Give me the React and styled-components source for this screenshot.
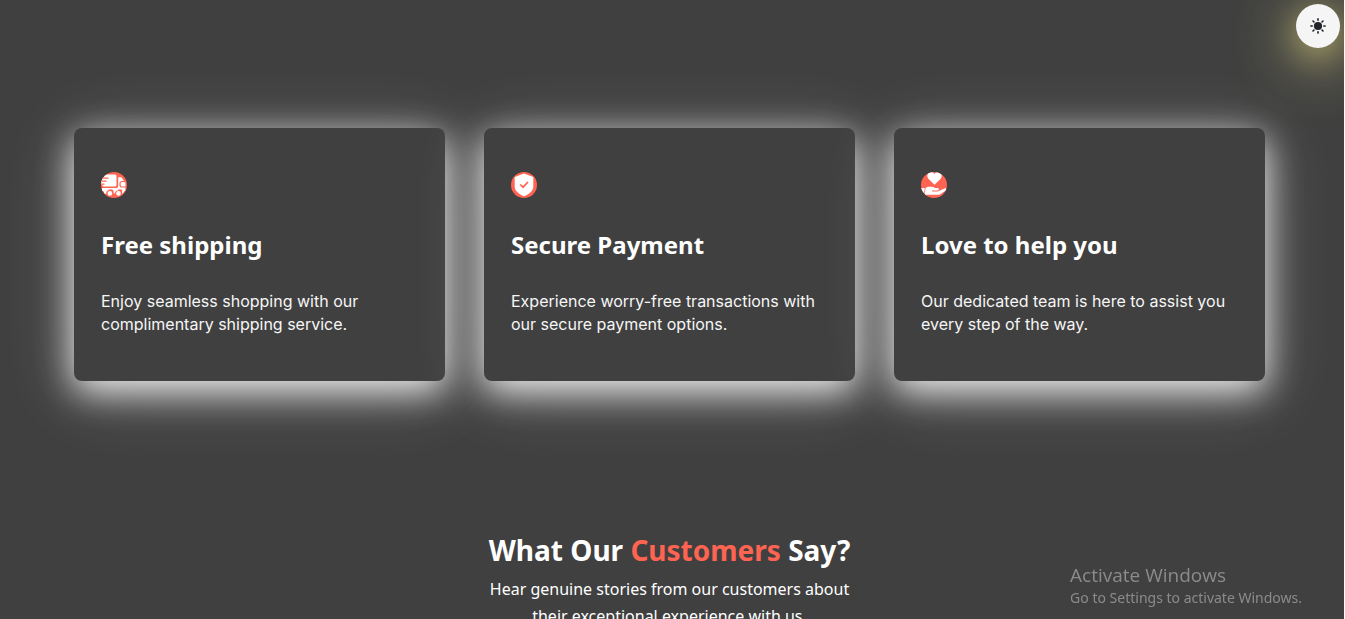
import React from "react";
import styled, { createGlobalStyle } from "styled-components";

const GlobalStyle = createGlobalStyle`
  *, *::before, *::after { box-sizing: border-box; }
  html { background: #ffffff; overflow: hidden; }
  body { margin: 0; }
  h2, h3, p { margin: 0; }
`;

const Page = styled.main`
  height: 100vh;
  overflow: hidden;
  padding-top: 128px;
  background: #404040;
  border-right: 1px solid #ffffff;
  color: #ffffff;
  font-family: "Noto Sans", sans-serif;
`;

const ThemeToggle = styled.button`
  position: fixed;
  top: 4px;
  right: 5px;
  z-index: 2;
  display: flex;
  align-items: center;
  justify-content: center;
  width: 44px;
  height: 44px;
  padding: 0;
  border: 0;
  border-radius: 50%;
  background: #f5f5f5;
  color: #212529;
  box-shadow: 0 8px 30px rgba(255, 240, 130, 0.4), 0 10px 60px 10px rgba(255, 245, 150, 0.4);
  cursor: pointer;
`;

const Services = styled.section`
  display: grid;
  grid-template-columns: repeat(3, 1fr);
  gap: 39px;
  padding: 0 79px 0 74px;
`;

const Card = styled.article`
  padding: 44px 27px 45px;
  border-radius: 8px;
  background: #404040;
  box-shadow: 0 10px 36px rgba(255, 255, 255, 0.9), 0 10px 70px rgba(255, 255, 255, 0.25);
`;

const IconBadge = styled.div`
  width: 26px;
  height: 26px;
  overflow: hidden;
  border-radius: 50%;
  background: #ff6452;

  svg { display: block; }
`;

const CardTitle = styled.h3`
  margin-top: 27px;
  font-size: 24px;
  font-weight: 700;
  line-height: 40px;
  white-space: nowrap;
`;

const CardText = styled.p`
  margin-top: 25px;
  color: #f6f6f6;
  font-family: Inter, sans-serif;
  font-size: 16px;
  line-height: 23px;
`;

const Reviews = styled.section`
  padding: 147px 5px 0 0;
  text-align: center;
`;

const ReviewsTitle = styled.h2`
  font-size: 28px;
  font-weight: 700;
  line-height: 44px;
`;

const Accent = styled.span`
  color: #ff6452;
`;

const ReviewsText = styled.p`
  max-width: 384px;
  margin: 4px auto 0;
  font-size: 16px;
  line-height: 27px;
`;

const ActivationNotice = styled.aside`
  position: fixed;
  right: 43px;
  bottom: 11px;
  color: #8b8b8b;
`;

const NoticeTitle = styled.p`
  font-family: "Open Sans", sans-serif;
  font-size: 19px;
  line-height: 24px;
`;

const NoticeText = styled.p`
  font-size: 14px;
  line-height: 21px;
`;

const Sun = () => (
  <svg width="16" height="16" viewBox="0 0 16 16" aria-hidden="true">
    <circle cx="8" cy="8" r="4.1" fill="currentColor" />
    <path
      stroke="currentColor"
      strokeWidth="1.6"
      strokeLinecap="round"
      d="M8 .9v1.300M8 13.800v1.300M.9 8h1.300M13.800 8h1.300M3 3l.9.9M12.100 12.100l.9.900M13 3l-.9.900M3.900 12.100l-.9.900"
    />
  </svg>
);

const Truck = () => (
  <svg width="26" height="26" viewBox="0 0 26 26" aria-hidden="true">
    <path fill="#fff" d="M3 2.500h11q1.500 0 1.500 1.500v9q0 1.500-1.500 1.500H2.500L0 12V5h3z" />
    <path fill="#fff" d="M17.200 5.200h3.200l4 5.500V19h-2.400q-1-1.700-3-1.700t-3 1.700h-3q-1-1.700-3.300-1.700T6.200 19H1v-3h14.200q2 0 2-2z" />
    <path fill="none" stroke="#ff6452" strokeWidth="1.200" d="M24.500 9.500h-3.200q-2.300 0-2.300 2v1.300q0 2.200 2 2.200h4" />
    <path stroke="#ff6452" strokeWidth="1.200" strokeLinecap="round" d="M0 6.200h7M1.500 9.200H5M0 12.200h3" />
    <circle cx="8.900" cy="21.400" r="2.300" fill="#fff" />
    <circle cx="17.500" cy="21.400" r="2.300" fill="#fff" />
    <path fill="#fff" d="M2 18.500h4L5 21.800H3.500zM12.300 18.500H15l-1.200 3h-.9zM21 18.500h2.800l-1.800 3h-.8z" />
  </svg>
);

const Shield = () => (
  <svg width="26" height="26" viewBox="0 0 26 26" aria-hidden="true">
    <path fill="#fff" d="M13 1.500 22.300 5v9.500c0 4.600-4.300 7.800-9.300 9.800-5-2-9.300-5.200-9.300-9.800V5z" />
    <path fill="none" stroke="#ff6452" strokeWidth="1.700" d="m9.200 12.500 2.800 2.700 5-5.200" />
  </svg>
);

const HeartHand = () => (
  <svg width="26" height="26" viewBox="0 0 26 26" aria-hidden="true">
    <path fill="#fff" d="M13.500 12.800 7.800 7.200C5.200 4.200 6.300.3 9.600 0c1.800-.1 3 .6 3.900 2 .9-1.400 2.100-2.100 3.900-2 3.300.3 4.400 4.200 1.800 7.200z" />
    <path fill="#fff" d="M4.600 16l2-1.200h4.400q1.500 0 3 1.200h2.700q1.300.2 1.300 1.300t-1.300 1.300H11v.8h6l6.200-3q1.600-.4 2 .7.200.9-.7 1.600L18.500 22.800H3.500zM0 16h3.800L2.800 23.500H0z" />
  </svg>
);

const services = [
  {
    icon: Truck,
    title: "Free shipping",
    text: "Enjoy seamless shopping with our complimentary shipping service.",
  },
  {
    icon: Shield,
    title: "Secure Payment",
    text: "Experience worry-free transactions with our secure payment options.",
  },
  {
    icon: HeartHand,
    title: "Love to help you",
    text: "Our dedicated team is here to assist you every step of the way.",
  },
];

export default function App() {
  return (
    <>
      <GlobalStyle />
      <Page>
        <ThemeToggle type="button" aria-label="Switch theme">
          <Sun />
        </ThemeToggle>
        <Services>
          {services.map(({ icon: Icon, title, text }) => (
            <Card key={title}>
              <IconBadge>
                <Icon />
              </IconBadge>
              <CardTitle>{title}</CardTitle>
              <CardText>{text}</CardText>
            </Card>
          ))}
        </Services>
        <Reviews>
          <ReviewsTitle>
            What Our <Accent>Customers</Accent> Say?
          </ReviewsTitle>
          <ReviewsText>
            Hear genuine stories from our customers about their exceptional
            experience with us.
          </ReviewsText>
        </Reviews>
        <ActivationNotice>
          <NoticeTitle>Activate Windows</NoticeTitle>
          <NoticeText>Go to Settings to activate Windows.</NoticeText>
        </ActivationNotice>
      </Page>
    </>
  );
}
